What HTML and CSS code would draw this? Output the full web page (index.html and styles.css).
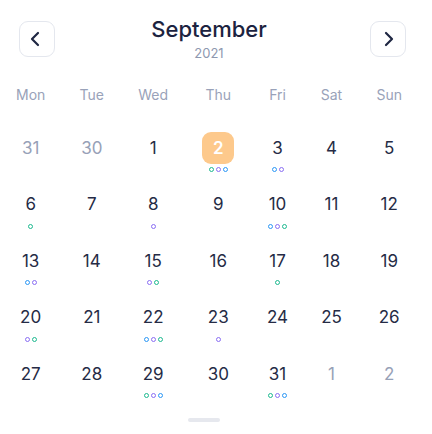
FILE: index.html
```html
<!DOCTYPE html>
<html lang="en">
<head>
    <meta charset="UTF-8">
    <meta name="viewport" content="width=device-width, initial-scale=1.0">
    <title>Calendar</title>
    <link rel="stylesheet" href="styles.css">
</head>
<body>
    <div class="calendar">
        <div class="head">
            <button class="nav prev" aria-label="Previous month">
                <svg width="20" height="20" viewBox="0 0 20 20"><path d="M12 4 L6 10 L12 16" /></svg>
            </button>
            <div class="title">
                <div class="month">September</div>
                <div class="year">2021</div>
            </div>
            <button class="nav next" aria-label="Next month">
                <svg width="20" height="20" viewBox="0 0 20 20"><path d="M8 4 L14 10 L8 16" /></svg>
            </button>
        </div>

        <div class="week">
            <div class="col">
                <div class="dow">Mon</div>
                <div class="day"><span class="num muted">31</span></div>
                <div class="day"><span class="num">6</span><span class="dots"><i class="g"></i></span></div>
                <div class="day"><span class="num">13</span><span class="dots"><i class="b"></i><i class="p"></i></span></div>
                <div class="day"><span class="num">20</span><span class="dots"><i class="p"></i><i class="g"></i></span></div>
                <div class="day"><span class="num">27</span></div>
            </div>
            <div class="col">
                <div class="dow">Tue</div>
                <div class="day"><span class="num muted">30</span></div>
                <div class="day"><span class="num">7</span></div>
                <div class="day"><span class="num">14</span></div>
                <div class="day"><span class="num">21</span></div>
                <div class="day"><span class="num">28</span></div>
            </div>
            <div class="col">
                <div class="dow">Wed</div>
                <div class="day"><span class="num">1</span></div>
                <div class="day"><span class="num">8</span><span class="dots"><i class="p"></i></span></div>
                <div class="day"><span class="num">15</span><span class="dots"><i class="p"></i><i class="g"></i></span></div>
                <div class="day"><span class="num">22</span><span class="dots"><i class="b"></i><i class="p"></i><i class="g"></i></span></div>
                <div class="day"><span class="num">29</span><span class="dots"><i class="g"></i><i class="p"></i><i class="b"></i></span></div>
            </div>
            <div class="col">
                <div class="dow">Thu</div>
                <div class="day"><span class="num today">2</span><span class="dots"><i class="g"></i><i class="p"></i><i class="b"></i></span></div>
                <div class="day"><span class="num">9</span></div>
                <div class="day"><span class="num">16</span></div>
                <div class="day"><span class="num">23</span><span class="dots"><i class="p"></i></span></div>
                <div class="day"><span class="num">30</span></div>
            </div>
            <div class="col narrow">
                <div class="dow">Fri</div>
                <div class="day"><span class="num">3</span><span class="dots"><i class="b"></i><i class="p"></i></span></div>
                <div class="day"><span class="num">10</span><span class="dots"><i class="b"></i><i class="p"></i><i class="g"></i></span></div>
                <div class="day"><span class="num">17</span><span class="dots"><i class="g"></i></span></div>
                <div class="day"><span class="num">24</span></div>
                <div class="day"><span class="num">31</span><span class="dots"><i class="g"></i><i class="p"></i><i class="b"></i></span></div>
            </div>
            <div class="col">
                <div class="dow">Sat</div>
                <div class="day"><span class="num">4</span></div>
                <div class="day"><span class="num">11</span></div>
                <div class="day"><span class="num">18</span></div>
                <div class="day"><span class="num">25</span></div>
                <div class="day"><span class="num muted">1</span></div>
            </div>
            <div class="col">
                <div class="dow">Sun</div>
                <div class="day"><span class="num">5</span></div>
                <div class="day"><span class="num">12</span></div>
                <div class="day"><span class="num">19</span></div>
                <div class="day"><span class="num">26</span></div>
                <div class="day"><span class="num muted">2</span></div>
            </div>
        </div>

        <div class="handle"></div>
    </div>
</body>
</html>
```

FILE: styles.css
```css
body {
    margin: 0;
    background: #fff;
    font-family: Inter, "Noto Sans", sans-serif;
    color: #222a44;
}
.calendar {
    width: 418px;
}
.head {
    display: grid;
    grid-template-columns: 1fr auto 1fr;
    align-items: start;
    padding-top: 15px;
}
.nav {
    width: 36px;
    height: 36px;
    margin-top: 6px;
    padding: 0;
    border: 1px solid #e4e7ee;
    border-radius: 9px;
    background: #fff;
    display: flex;
    align-items: center;
    justify-content: center;
    cursor: pointer;
}
.nav svg path {
    fill: none;
    stroke: #1f2742;
    stroke-width: 2.2;
    stroke-linecap: round;
    stroke-linejoin: round;
}
.prev {
    justify-self: start;
    margin-left: 19px;
}
.prev svg {
    margin-left: -3px;
}
.next {
    justify-self: end;
    margin-right: 12px;
}
.title {
    text-align: center;
}
.month {
    font-size: 22px;
    line-height: 28px;
    font-weight: 500;
    color: #1c2340;
}
.year {
    font-size: 13px;
    line-height: 16px;
    margin-top: 2px;
    color: #8e98b0;
}
.week {
    display: flex;
    justify-content: space-between;
    padding: 0 16px;
    margin-top: 24px;
}
.col {
    display: flex;
    flex-direction: column;
    align-items: center;
}
.col.narrow {
    width: 18px;
}
.dow {
    font-size: 14px;
    line-height: 20px;
    color: #99a2b9;
    margin-bottom: 26.5px;
}
.day {
    height: 56.5px;
    display: flex;
    flex-direction: column;
    align-items: center;
}
.num {
    height: 32px;
    line-height: 32px;
    font-size: 17px;
    font-weight: 400;
    color: #252b45;
}
.num.muted {
    color: #97a1b7;
}
.num.today {
    width: 32px;
    border-radius: 9px;
    background: #fdc98c;
    color: #fff;
    font-weight: 600;
    text-align: center;
}
.dots {
    display: flex;
    gap: 2px;
    margin-top: 3.5px;
}
.dots i {
    width: 5px;
    height: 5px;
    box-sizing: border-box;
    border: 1.5px solid;
    border-radius: 50%;
}
.dots .g { border-color: #1db98f; }
.dots .p { border-color: #8a6ef3; }
.dots .b { border-color: #2b97f5; }
.handle {
    width: 32px;
    height: 4px;
    border-radius: 2px;
    background: #e6e8ee;
    margin: 3.5px 0 0 188px;
}
```
